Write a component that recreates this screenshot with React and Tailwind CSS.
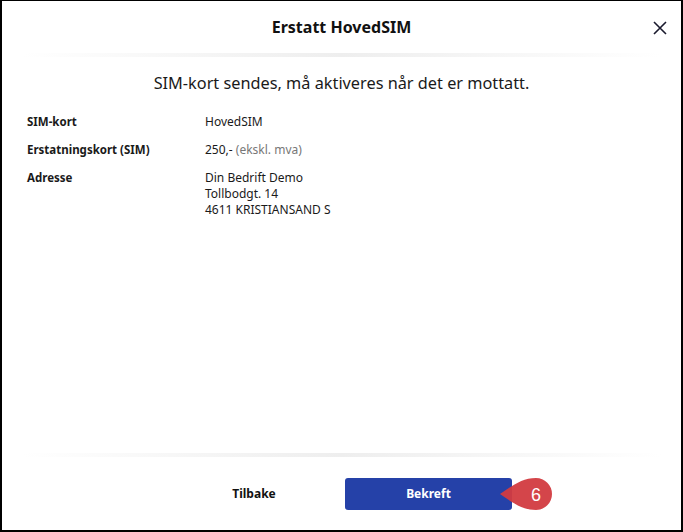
export default function App() {
  const font = { fontFamily: '"Noto Sans", "Open Sans", sans-serif' };
  return (
    <div className="w-[683px] h-[532px] bg-white border-l-2 border-r-2 border-b-2 border-t border-black flex flex-col" style={font}>
      <div className="relative h-[52px] flex items-center justify-center shrink-0">
        <div className="text-[16px] font-bold text-[#111]">Erstatt HovedSIM</div>
        <button className="absolute right-[12px] top-[18px] w-[18px] h-[18px] flex items-center justify-center">
          <svg width="14" height="14" viewBox="0 0 14 14" fill="none" stroke="#1a1a2e" strokeWidth="1.6">
            <path d="M1 1 L13 13 M13 1 L1 13" />
          </svg>
        </button>
      </div>
      <div className="h-[4px] mx-[20px] bg-gradient-to-r from-white via-[#eeeeee] to-white shrink-0"></div>
      <div className="flex-1 flex flex-col">
        <div className="text-center text-[16.3px] text-[#1a1a1a] mt-[15px] leading-[22px]">SIM-kort sendes, må aktiveres når det er mottatt.</div>
        <div className="mt-[20px] pl-[25px] text-[#1a1a1a] grid grid-cols-[178px_1fr] gap-y-[12px] leading-[16px]">
          <div className="font-bold text-[11.5px]">SIM-kort</div>
          <div className="text-[12px]">HovedSIM</div>
          <div className="font-bold text-[11.5px]">Erstatningskort (SIM)</div>
          <div className="text-[12px]">250,- <span className="text-[#777]">(ekskl. mva)</span></div>
          <div className="font-bold text-[11.5px]">Adresse</div>
          <div className="text-[12px] leading-[16px] -mt-[0.5px]">
            <div>Din Bedrift Demo</div>
            <div>Tollbodgt. 14</div>
            <div>4611 KRISTIANSAND S</div>
          </div>
        </div>
      </div>
      <div className="h-[4px] mx-[20px] bg-gradient-to-r from-white via-[#eeeeee] to-white shrink-0"></div>
      <div className="h-[73px] shrink-0 flex items-center">
        <div className="w-[164px] ml-[170px] flex justify-center text-[12px] font-bold text-[#111]">Tilbake</div>
        <div className="relative ml-[9px]">
          <button className="w-[167px] h-[32px] rounded-[3px] bg-[#2541a8] text-white text-[12px] font-bold">Bekreft</button>
          <svg className="absolute left-[155px] top-[-2px]" width="56" height="36" viewBox="0 0 56 36">
            <path d="M0 18 C12 10, 22 2, 36 2 A16 16 0 0 1 36 34 C22 34, 12 26, 0 18 Z" fill="#d23b40" fillOpacity="0.95" />
            <text x="36" y="24.5" textAnchor="middle" fill="#fff" fontSize="18" fontFamily="Liberation Sans, Arial, sans-serif">6</text>
          </svg>
        </div>
      </div>
    </div>
  );
}
